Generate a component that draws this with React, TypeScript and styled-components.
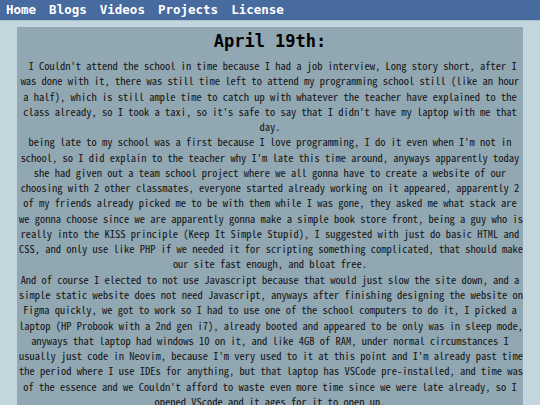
import React from "react";
import styled, { createGlobalStyle } from "styled-components";

const Global = createGlobalStyle`
  html, body { margin: 0; padding: 0; }
  body {
    background: #c3d6de;
    font-family: "Liberation Sans", Arial, sans-serif;
    overflow: hidden;
  }
`;

const Page = styled.div`
  display: flex;
  flex-direction: column;
  min-height: 405px;
`;

const NavBar = styled.nav`
  display: flex;
  align-items: center;
  gap: 13px;
  height: 20px;
  padding: 0 6px;
  background: #476a9f;
  border-bottom: 1px solid #a9c0cf;
`;

const NavLink = styled.a`
  font-family: "DejaVu Sans Mono", monospace;
  font-weight: bold;
  font-size: 12.5px;
  line-height: 20px;
  color: #ffffff;
  text-decoration: none;
`;

const Main = styled.main`
  display: flex;
  justify-content: flex-start;
  padding: 6px 17px 0 17px;
`;

const Article = styled.article`
  width: 506px;
  background: #91a7b2;
  padding: 4px 2px 20px;
  box-sizing: border-box;
`;

const Title = styled.h2`
  margin: 0 0 7px;
  font-family: "DejaVu Sans Mono", monospace;
  font-weight: bold;
  font-size: 17px;
  line-height: 20px;
  text-align: center;
  color: #000;
`;

const Paragraph = styled.p`
  margin: 0;
  font-family: "Noto Sans Mono CJK JP", "Noto Sans CJK JP", monospace;
  font-size: 10.5px;
  line-height: 15.27px;
  text-align: center;
  color: #141414;
  white-space: nowrap;
`;

const paragraphs: string[][] = [
  [
    "\u00a0I Couldn't attend the school in time because I had a job interview, Long story short, after I",
    "was done with it, there was still time left to attend my programming school still (like an hour",
    "a half), which is still ample time to catch up with whatever the teacher have explained to the",
    "class already, so I took a taxi, so it's safe to say that I didn't have my laptop with me that",
    "day.",
  ],
  [
    "being late to my school was a first because I love programming, I do it even when I'm not in",
    "school, so I did explain to the teacher why I'm late this time around, anyways apparently today",
    "she had given out a team school project where we all gonna have to create a website of our",
    "choosing with 2 other classmates, everyone started already working on it appeared, apparently 2",
    "of my friends already picked me to be with them while I was gone, they asked me what stack are",
    "we gonna choose since we are apparently gonna make a simple book store front, being a guy who is",
    "really into the KISS principle (Keep It Simple Stupid), I suggested with just do basic HTML and",
    "CSS, and only use like PHP if we needed it for scripting something complicated, that should make",
    "our site fast enough, and bloat free.",
  ],
  [
    "And of course I elected to not use Javascript because that would just slow the site down, and a",
    "simple static website does not need Javascript, anyways after finishing designing the website on",
    "Figma quickly, we got to work so I had to use one of the school computers to do it, I picked a",
    "laptop (HP Probook with a 2nd gen i7), already booted and appeared to be only was in sleep mode,",
    "anyways that laptop had windows 10 on it, and like 4GB of RAM, under normal circumstances I",
    "usually just code in Neovim, because I'm very used to it at this point and I'm already past time",
    "the period where I use IDEs for anything, but that laptop has VSCode pre-installed, and time was",
    "of the essence and we Couldn't afford to waste even more time since we were late already, so I",
    "opened VScode and it ages for it to open up.",
  ],
];

const links = ["Home", "Blogs", "Videos", "Projects", "License"];

export default function App() {
  return (
    <Page>
      <Global />
      <NavBar>
        {links.map((l) => (
          <NavLink key={l} href="#">
            {l}
          </NavLink>
        ))}
      </NavBar>
      <Main>
        <Article>
          <Title>April 19th:</Title>
          {paragraphs.map((lines, i) => (
            <Paragraph key={i}>
              {lines.map((line, j) => (
                <React.Fragment key={j}>
                  {line}
                  {j < lines.length - 1 && <br />}
                </React.Fragment>
              ))}
            </Paragraph>
          ))}
        </Article>
      </Main>
    </Page>
  );
}
